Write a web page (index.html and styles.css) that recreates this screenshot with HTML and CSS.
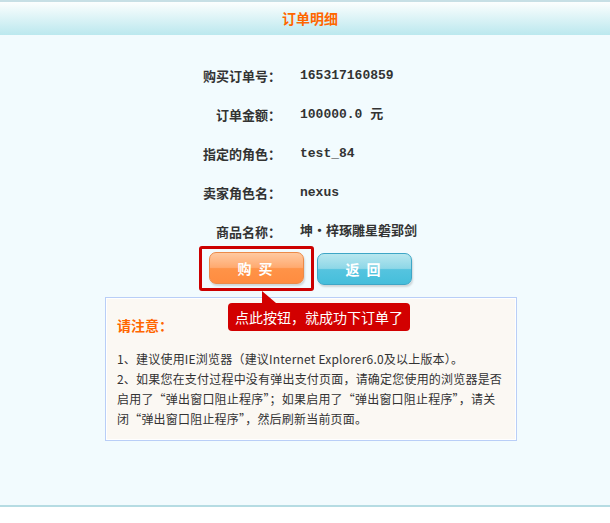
FILE: index.html
```html
<!DOCTYPE html>
<html lang="zh-CN">
<head>
    <meta charset="UTF-8">
    <title>订单明细</title>
    <link rel="stylesheet" href="styles.css">
</head>
<body>
    <div class="header">订单明细</div>

    <div class="main">
        <div class="info">
            <div class="label">购买订单号：</div>
            <div class="value">165317160859</div>
            <div class="label">订单金额：</div>
            <div class="value">100000.0 元</div>
            <div class="label">指定的角色：</div>
            <div class="value">test_84</div>
            <div class="label">卖家角色名：</div>
            <div class="value">nexus</div>
            <div class="label">商品名称：</div>
            <div class="value">坤・梓琢雕星磐郢剑</div>
        </div>

        <div class="actions">
            <div class="highlight">
                <button class="btn btn-buy">购 买</button>
            </div>
            <button class="btn btn-back">返 回</button>
        </div>

        <div class="notice">
            <div class="tip">点此按钮，就成功下订单了</div>
            <h3>请注意：</h3>
            <p>1、建议使用IE浏览器（建议Internet Explorer6.0及以上版本）。<br>
            2、如果您在支付过程中没有弹出支付页面，请确定您使用的浏览器是否<br>启用了“弹出窗口阻止程序”；如果启用了“弹出窗口阻止程序”，请关<br>闭“弹出窗口阻止程序”，然后刷新当前页面。</p>
        </div>
    </div>
</body>
</html>
```

FILE: styles.css
```css
body {
    margin: 0;
    background-color: #fff;
    color: #333;
    font-family: "Noto Sans CJK SC", sans-serif;
    font-size: 12px;
}

.header {
    height: 33px;
    line-height: 33px;
    border-top: 2px solid #c7dfe5;
    background: linear-gradient(#fcfefe, #bbe8ee);
    text-align: center;
    padding-left: 10px;
    color: #ff6600;
    font-size: 14px;
    font-weight: bold;
}

.main {
    height: 439px;
    padding-top: 31px;
    background-color: #f2fbfe;
    border-bottom: 2px solid #b6dce3;
}

.info {
    display: grid;
    grid-template-columns: 281px auto;
    column-gap: 19px;
    row-gap: 19px;
    line-height: 20px;
    font-size: 13px;
    font-weight: bold;
}

.label {
    text-align: right;
}

.value {
    font-family: "Liberation Mono", "Noto Sans CJK SC", monospace;
}

.actions {
    display: flex;
    justify-content: center;
    align-items: center;
    gap: 3px;
    margin-top: 4px;
}

.highlight {
    padding: 3px 7px 4px;
    border: 3px solid #cc0000;
    border-radius: 3px;
}

.btn {
    display: block;
    width: 95px;
    height: 32px;
    border-radius: 7px;
    color: #fff;
    font-family: "Noto Sans CJK SC", sans-serif;
    font-size: 14px;
    font-weight: bold;
    letter-spacing: 2px;
    cursor: pointer;
}

.btn-buy {
    border: 1px solid #ec8a48;
    background: linear-gradient(#ffc9a0, #ffaa70 48%, #ff9348 52%, #ff8c40);
    box-shadow: 1px 2px 2px rgba(0, 0, 0, 0.15);
}

.btn-back {
    border: 1px solid #3ea6c6;
    background: linear-gradient(#b8e7ef, #8ed7e7 48%, #55c4df 52%, #45bedb);
    box-shadow: 1px 2px 2px rgba(0, 0, 0, 0.15);
}

.notice {
    position: relative;
    width: 388px;
    margin: 6px 0 0 105px;
    padding: 17px 11px 11px;
    border: 1px solid #b9cef7;
    box-shadow: inset 0 0 0 1px #fff;
    background-color: #fbf8f3;
}

.notice h3 {
    margin: 0;
    line-height: 20px;
    color: #ff6600;
    font-size: 14px;
}

.notice p {
    margin: 14px 0 0;
    line-height: 20px;
    letter-spacing: 0.2px;
    white-space: nowrap;
}

.tip {
    position: absolute;
    left: 122px;
    top: 5px;
    padding: 0 7px;
    height: 28px;
    line-height: 28px;
    border-radius: 4px;
    background-color: #d20000;
    color: #fff;
    font-size: 14px;
    white-space: nowrap;
}

.tip::before {
    content: "";
    position: absolute;
    left: 34px;
    top: -12px;
    border-bottom: 12px solid #d20000;
    border-right: 14px solid transparent;
}
```
